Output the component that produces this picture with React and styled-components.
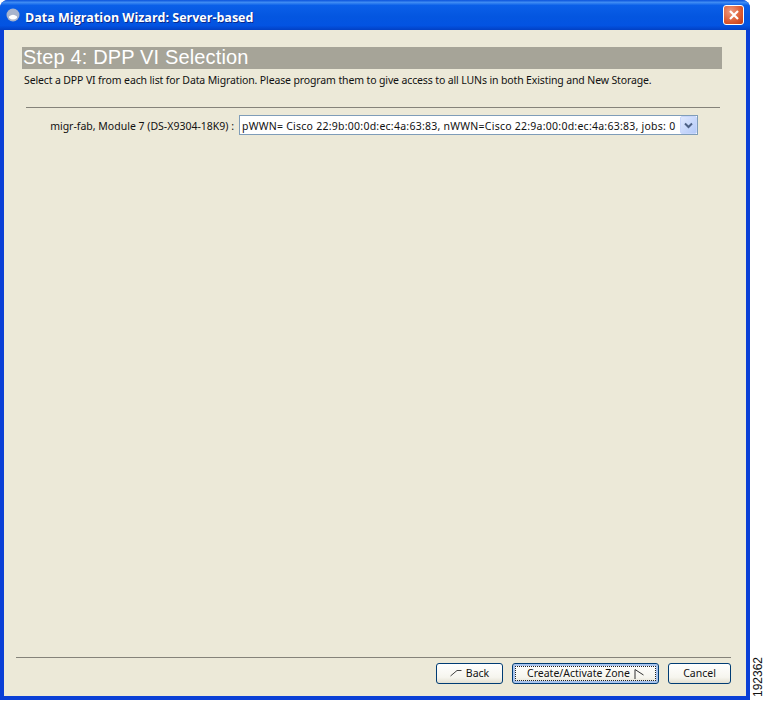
import React from 'react';
import styled, { createGlobalStyle } from 'styled-components';

const GlobalStyle = createGlobalStyle`
  html, body {
    margin: 0;
    padding: 0;
    background: #fff;
  }
`;

const Page = styled.div`
  width: 765px;
  height: 701px;
  display: flex;
  overflow: hidden;
  font-family: 'Noto Sans', Tahoma, sans-serif;
  font-size: 10.5px;
  color: #111;
`;

const Frame = styled.div`
  width: 750px;
  height: 700px;
  display: flex;
  flex-direction: column;
  background: #0a3fd6;
  border-radius: 8px 8px 0 0;
  padding: 0 4px 4px;
  box-sizing: border-box;
`;

const TitleBar = styled.div`
  height: 30px;
  margin: 0 -4px;
  padding: 4px 6px 0;
  box-sizing: border-box;
  display: flex;
  align-items: center;
  gap: 5px;
  border-radius: 8px 8px 0 0;
  background: linear-gradient(180deg, #0a52dc 0%, #3f8cf3 8%, #0a5fe8 18%, #0456e0 55%, #0353e2 85%, #0240c4 100%);
`;

const WindowIcon = styled.svg`
  width: 14px;
  height: 14px;
  margin-bottom: 4px;
`;

const TitleText = styled.span`
  flex: 1;
  color: #fff;
  font-family: 'Open Sans', sans-serif;
  font-weight: bold;
  font-size: 12.5px;
  text-shadow: 1px 1px 0 #0a2a8c;
`;

const CloseButton = styled.div`
  width: 21px;
  height: 20px;
  margin-bottom: 4px;
  border: 1px solid #fff;
  border-radius: 3px;
  box-sizing: border-box;
  background: radial-gradient(circle at 35% 30%, #ee9a80, #dc5a30 60%, #c23a14);
  display: flex;
  align-items: center;
  justify-content: center;
`;

const Client = styled.div`
  flex: 1;
  display: flex;
  flex-direction: column;
  background: #ece9d8;
  min-height: 0;
`;

const Header = styled.div`
  padding: 17px 24px 0 18px;
`;

const Banner = styled.div`
  height: 22px;
  line-height: 21px;
  padding-left: 1px;
  background: #a6a498;
  color: #fff;
  font-family: 'Liberation Sans', Arial, sans-serif;
  font-size: 20px;
  letter-spacing: 0.15px;
`;

const Instructions = styled.div`
  margin: 5px 0 0 2px;
  line-height: 13px;
  letter-spacing: -0.13px;
  white-space: nowrap;
`;

const Divider = styled.hr`
  border: 0;
  height: 1px;
  background: #85837a;
  margin: ${(p) => p.$margin};
`;

const SelectRow = styled.div`
  display: flex;
  align-items: center;
  justify-content: flex-end;
  gap: 5px;
  height: 20px;
  margin: 7px 48px 0 0;
  white-space: nowrap;
`;

const SelectLabel = styled.span`
  padding-top: 2px;
`;

const SelectBox = styled.div`
  width: 459px;
  height: 20px;
  box-sizing: border-box;
  border: 1px solid #7f9db9;
  background: #fff;
  display: flex;
  align-items: center;
  justify-content: space-between;
  padding: 0 0 0 2px;
`;

const SelectValue = styled.span`
  padding-top: 2px;
  letter-spacing: 0.25px;
`;

const DropButton = styled.div`
  width: 17px;
  height: 18px;
  border-radius: 2px;
  background: linear-gradient(135deg, #dfe8fe, #b4caf8);
  border: 1px solid #c8d6fb;
  box-sizing: border-box;
  display: flex;
  align-items: center;
  justify-content: center;
`;

const Spacer = styled.div`
  flex: 1;
`;

const Footer = styled.div`
  display: flex;
  justify-content: flex-end;
  gap: 9px;
  padding: 0 15px 12px 0;
`;

const Button = styled.div`
  height: 21px;
  width: ${(p) => p.$width}px;
  box-sizing: border-box;
  padding-bottom: 2px;
  border: 1px solid #003c74;
  border-radius: 3px;
  background: linear-gradient(180deg, #ffffff 0%, #f6f5ee 70%, #e3e0d2 100%);
  display: flex;
  align-items: center;
  justify-content: center;
  gap: 4px;
  position: relative;
  ${(p) => p.$focused && `
    box-shadow: inset 0 0 0 2px #a9c4ee;
    &::after {
      content: '';
      position: absolute;
      inset: 2px;
      border: 1px dotted #222;
    }
  `}
`;

const NextIcon = styled.svg`
  width: 10px;
  height: 10px;
  margin-top: 2px;
`;

const StampColumn = styled.div`
  flex: 1;
  display: flex;
  justify-content: flex-start;
  align-items: center;
  padding-top: 4px;
  font-family: 'Liberation Sans', Arial, sans-serif;
  font-size: 12px;
  color: #111;
  writing-mode: vertical-rl;
  transform: rotate(180deg);
`;

const BackMark = () => (
  <svg width="12" height="8" viewBox="0 0 12 8">
    <path d="M0.5 7 L7 1.5 L11.5 1.5" fill="none" stroke="#444" strokeWidth="1" />
  </svg>
);

const NextMark = () => (
  <NextIcon viewBox="0 0 10 10">
    <path d="M1 10 L1 0.5 L9.5 6" fill="none" stroke="#333" strokeWidth="1" />
  </NextIcon>
);

const App = () => (
  <Page>
    <GlobalStyle />
    <Frame>
      <TitleBar>
        <WindowIcon viewBox="0 0 14 14">
          <circle cx="7" cy="7" r="6.5" fill="#a8b4cc" />
          <path d="M3 8.5 Q7 5 11 8.5 L11 10 Q7 13 3 10 Z" fill="#fff" />
        </WindowIcon>
        <TitleText>Data Migration Wizard: Server-based</TitleText>
        <CloseButton>
          <svg width="12" height="12" viewBox="0 0 12 12">
            <path d="M2 2 L10 10 M10 2 L2 10" stroke="#fff" strokeWidth="2.2" />
          </svg>
        </CloseButton>
      </TitleBar>
      <Client>
        <Header>
          <Banner>Step 4: DPP VI Selection</Banner>
          <Instructions>
            Select a DPP VI from each list for Data Migration. Please program them to give access to all LUNs in both Existing and New Storage.
          </Instructions>
        </Header>
        <Divider $margin="20px 26px 0 22px" />
        <SelectRow>
          <SelectLabel>migr-fab, Module 7 (DS-X9304-18K9) :</SelectLabel>
          <SelectBox>
            <SelectValue>pWWN= Cisco 22:9b:00:0d:ec:4a:63:83, nWWN=Cisco 22:9a:00:0d:ec:4a:63:83, jobs: 0</SelectValue>
            <DropButton>
              <svg width="9" height="7" viewBox="0 0 9 7">
                <path d="M1 1.5 L4.5 5 L8 1.5" fill="none" stroke="#4d6185" strokeWidth="2" />
              </svg>
            </DropButton>
          </SelectBox>
        </SelectRow>
        <Spacer />
        <Divider $margin="0 15px 5px 12px" />
        <Footer>
          <Button $width={67}><BackMark />Back</Button>
          <Button $width={147} $focused>Create/Activate Zone <NextMark /></Button>
          <Button $width={63}>Cancel</Button>
        </Footer>
      </Client>
    </Frame>
    <StampColumn>192362</StampColumn>
  </Page>
);

export default App;
